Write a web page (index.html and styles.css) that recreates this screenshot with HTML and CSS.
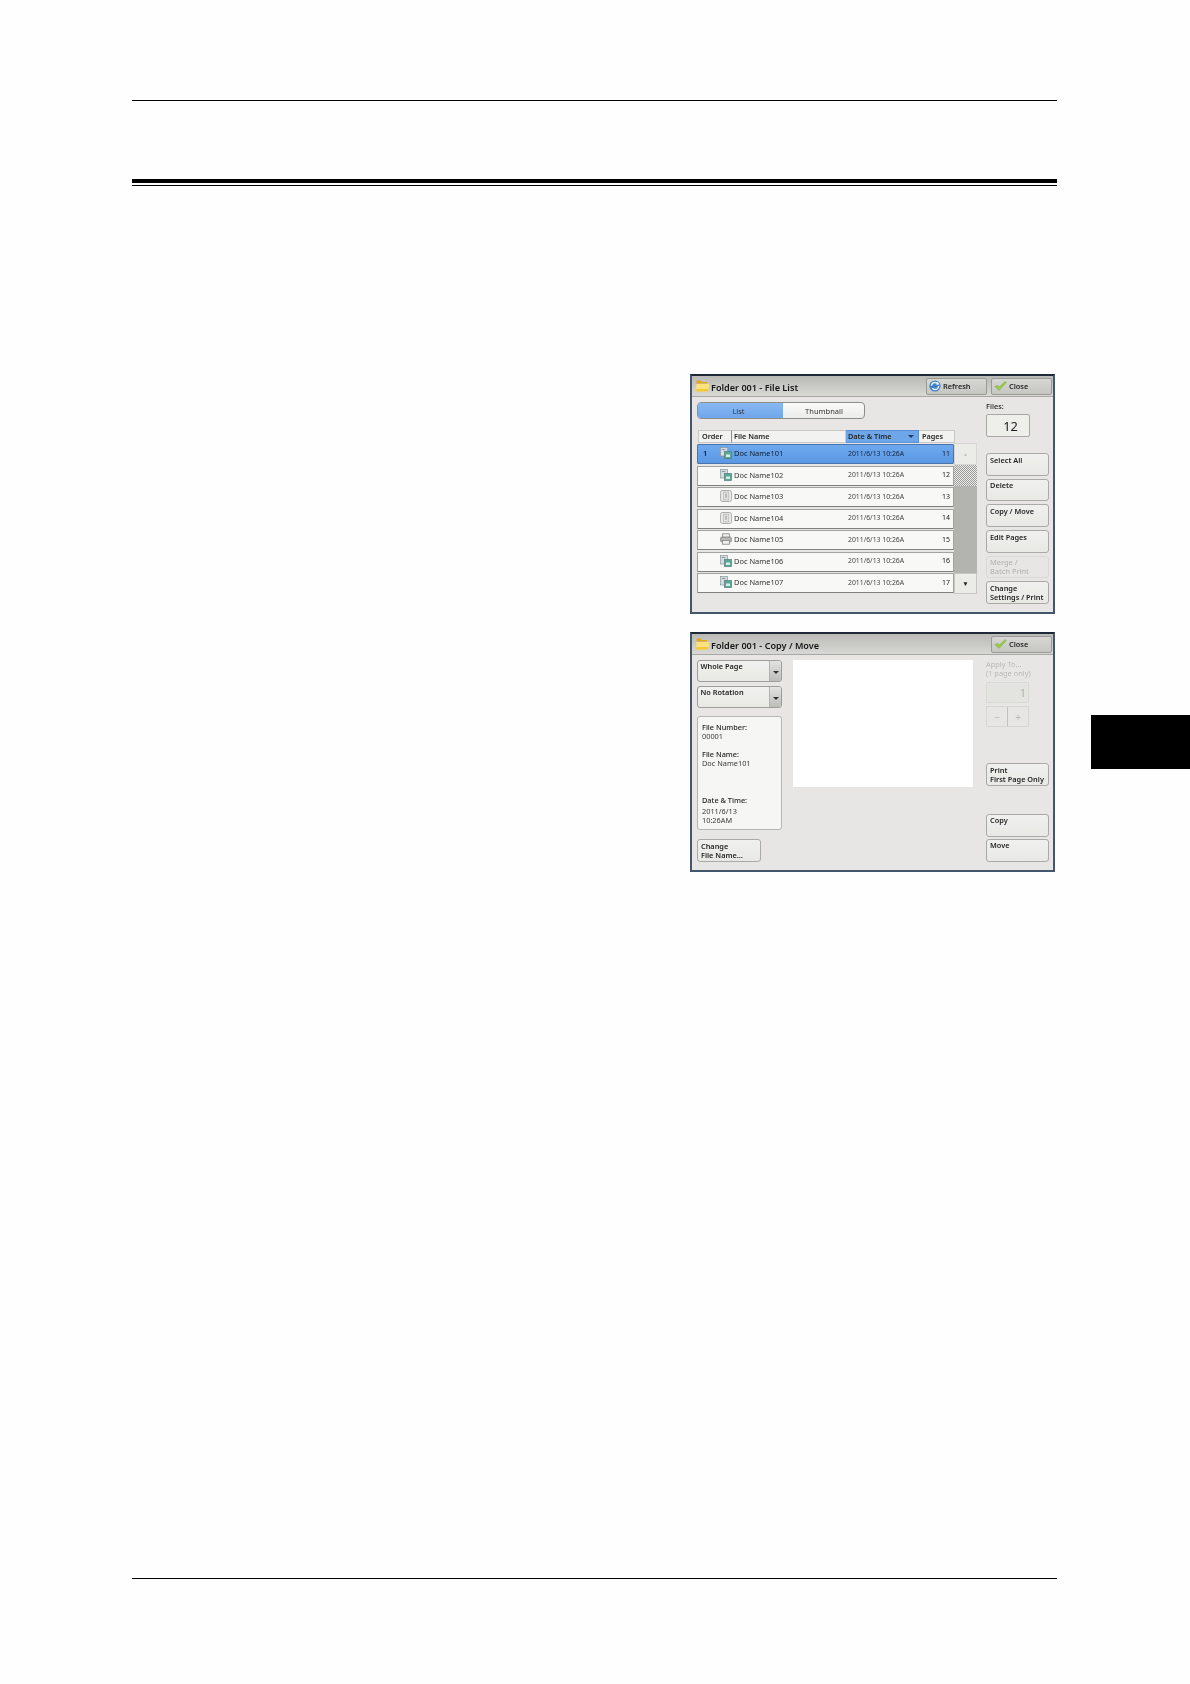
FILE: index.html
```html
<!DOCTYPE html>
<html lang="en">
<head>
<meta charset="utf-8">
<title>Folder 001</title>
<link rel="stylesheet" href="styles.css">
</head>
<body>
<svg class="defs" width="0" height="0" aria-hidden="true">
  <symbol id="i-folder" viewBox="0 0 14 12">
    <path d="M0.5 2.2 L0.5 1.2 Q0.5 0.5 1.2 0.5 L4.6 0.5 L5.8 2 L11 2 L11 3.6 L0.5 3.6 Z" fill="#e2a818"/>
    <path d="M0.3 4 L13.6 4 L12 11.5 L0.3 11.5 Z" fill="#fbe27c"/>
    <path d="M0.3 9 L12.5 9 L12 11.5 L0.3 11.5 Z" fill="#f4c83c"/>
  </symbol>
  <symbol id="i-file" viewBox="0 0 12 12">
    <rect x="0.5" y="0.5" width="7" height="8.5" fill="#d3dce1" stroke="#8b979e" stroke-width=".7"/>
    <rect x="1.8" y="2" width="3.5" height="1" fill="#8b979e"/>
    <rect x="4.5" y="4.5" width="7" height="7" fill="#5aa892" stroke="#567a82" stroke-width=".7"/>
    <rect x="6" y="7.5" width="4" height="2.5" fill="#d4efe6"/>
  </symbol>
  <symbol id="i-note" viewBox="0 0 12 12">
    <rect x="0.6" y="0.5" width="10.8" height="11" rx="1.8" fill="#f0f0ee" stroke="#9a9a98" stroke-width=".8"/>
    <rect x="3.2" y="2" width="5.6" height="8" fill="#e2e2e0" stroke="#a8a8a6" stroke-width=".6"/>
    <path d="M6 3.6 V7.8" stroke="#8a8a88" stroke-width=".9"/>
  </symbol>
  <symbol id="i-printer" viewBox="0 0 12 12">
    <rect x="2.5" y="0.8" width="7" height="3.4" fill="#f1f1ef" stroke="#858583" stroke-width=".8"/>
    <rect x="0.6" y="4.2" width="10.8" height="4.6" rx="1" fill="#b9b9b7" stroke="#7c7c7a" stroke-width=".8"/>
    <rect x="2.5" y="7.4" width="7" height="3.8" fill="#f1f1ef" stroke="#858583" stroke-width=".8"/>
  </symbol>
  <symbol id="i-refresh" viewBox="0 0 12 12">
    <circle cx="6" cy="6" r="5.6" fill="#3f82c8"/>
    <circle cx="6" cy="6" r="3.6" fill="none" stroke="#e8f2fb" stroke-width="1.5" stroke-dasharray="8.5 3"/>
    <path d="M8.4 1.6 L10.6 4.4 L7.2 4.8 Z" fill="#e8f2fb"/>
  </symbol>
  <symbol id="i-check" viewBox="0 0 13 10">
    <path d="M0.8 5.4 L4 4.4 L5.4 6 L11 0.6 L12.4 1.6 L5 9.4 Z" fill="#9ccb4a" stroke="#6da02c" stroke-width=".4"/>
  </symbol>
</svg>

<div class="page">
  <div class="rule-top"></div>
  <div class="rule-heavy"></div>
  <div class="rule-thin"></div>

  <div class="figures">
    <section class="dialog">
      <header class="titlebar">
        <svg class="ico-folder"><use href="#i-folder"/></svg>
        <h2 class="title">Folder 001 - File List</h2>
        <button class="bar-btn"><svg class="ico-refresh"><use href="#i-refresh"/></svg>Refresh</button>
        <button class="bar-btn"><svg class="ico-check"><use href="#i-check"/></svg>Close</button>
      </header>
      <div class="body">
        <div class="main">
          <div class="segments">
            <span class="seg seg-on">List</span>
            <span class="seg">Thumbnail</span>
          </div>
          <div class="thead">
            <span class="th th-order">Order</span>
            <span class="th th-name">File Name</span>
            <span class="th th-date">Date &amp; Time<i class="tri"></i></span>
            <span class="th th-pages">Pages</span>
          </div>
          <div class="listwrap">
            <div class="rows">
              <div class="row row-on"><span class="c-order">1</span><svg class="ico-row"><use href="#i-file"/></svg><span class="c-name">Doc Name101</span><span class="c-date">2011/6/13 10:26A</span><span class="c-pages">11</span></div>
              <div class="row"><span class="c-order"></span><svg class="ico-row"><use href="#i-file"/></svg><span class="c-name">Doc Name102</span><span class="c-date">2011/6/13 10:26A</span><span class="c-pages">12</span></div>
              <div class="row"><span class="c-order"></span><svg class="ico-row"><use href="#i-note"/></svg><span class="c-name">Doc Name103</span><span class="c-date">2011/6/13 10:26A</span><span class="c-pages">13</span></div>
              <div class="row"><span class="c-order"></span><svg class="ico-row"><use href="#i-note"/></svg><span class="c-name">Doc Name104</span><span class="c-date">2011/6/13 10:26A</span><span class="c-pages">14</span></div>
              <div class="row"><span class="c-order"></span><svg class="ico-row"><use href="#i-printer"/></svg><span class="c-name">Doc Name105</span><span class="c-date">2011/6/13 10:26A</span><span class="c-pages">15</span></div>
              <div class="row"><span class="c-order"></span><svg class="ico-row"><use href="#i-file"/></svg><span class="c-name">Doc Name106</span><span class="c-date">2011/6/13 10:26A</span><span class="c-pages">16</span></div>
              <div class="row"><span class="c-order"></span><svg class="ico-row"><use href="#i-file"/></svg><span class="c-name">Doc Name107</span><span class="c-date">2011/6/13 10:26A</span><span class="c-pages">17</span></div>
            </div>
            <div class="scroll">
              <span class="sc-btn sc-up">▲</span>
              <span class="sc-thumb"></span>
              <span class="sc-track"></span>
              <span class="sc-btn sc-down">▼</span>
            </div>
          </div>
        </div>
        <div class="side">
          <span class="files-label">Files:</span>
          <div class="files-box">12</div>
          <div class="stack">
            <button class="btn">Select All</button>
            <button class="btn">Delete</button>
            <button class="btn">Copy / Move</button>
            <button class="btn">Edit Pages</button>
            <button class="btn btn-off"><span>Merge /<br>Batch Print</span></button>
            <button class="btn"><span>Change<br>Settings / Print</span></button>
          </div>
        </div>
      </div>
    </section>

    <section class="dialog">
      <header class="titlebar">
        <svg class="ico-folder"><use href="#i-folder"/></svg>
        <h2 class="title">Folder 001 - Copy / Move</h2>
        <button class="bar-btn"><svg class="ico-check"><use href="#i-check"/></svg>Close</button>
      </header>
      <div class="body body-copy">
        <div class="left">
          <div class="drop"><span class="drop-text">Whole Page</span><span class="drop-arrow"><i class="tri tri-dark"></i></span></div>
          <div class="drop"><span class="drop-text">No Rotation</span><span class="drop-arrow"><i class="tri tri-dark"></i></span></div>
          <div class="info">
            <p class="info-k">File Number:</p>
            <p class="info-v">00001</p>
            <p class="info-k info-gap1">File Name:</p>
            <p class="info-v">Doc Name101</p>
            <p class="info-k info-gap2">Date &amp; Time:</p>
            <p class="info-v info-date">2011/6/13<br>10:26AM</p>
          </div>
          <button class="btn btn-rename"><span>Change<br>File Name...</span></button>
        </div>
        <div class="preview"></div>
        <div class="side side-copy">
          <p class="apply">Apply To...<br>(1 page only)</p>
          <div class="num">1</div>
          <div class="stepper"><span>−</span><span>+</span></div>
          <button class="btn btn-print"><span>Print<br>First Page Only</span></button>
          <button class="btn btn-copy">Copy</button>
          <button class="btn btn-move">Move</button>
        </div>
      </div>
    </section>
  </div>

  <div class="rule-bottom"></div>
  <div class="chapter-tab"></div>
</div>
</body>
</html>
```

FILE: styles.css
```css
* { box-sizing: border-box; }
html, body { margin: 0; padding: 0; background: #fefefe; }
body { font-family: "Noto Sans", "Liberation Sans", sans-serif; color: #222; }
.defs { position: absolute; }
.page { position: relative; width: 1190px; height: 1684px; padding: 100px 133px 0 132px; overflow: hidden; }
.rule-top { height: 1px; background: #000; }
.rule-heavy { height: 4px; margin-top: 78px; background: #000; }
.rule-thin { height: 1px; margin-top: 2px; background: #000; }
.figures { display: flex; flex-direction: column; align-items: flex-end; gap: 18px; margin-top: 188px; padding-right: 2px; }
.rule-bottom { height: 1px; margin-top: 706px; background: #000; }
.chapter-tab { position: absolute; left: 1091px; top: 715px; width: 99px; height: 54px; background: #000; }

.dialog { width: 365px; height: 240px; display: flex; flex-direction: column; background: #e7e6e4; border: 2px solid #44566c; border-top-color: #1d2937; filter: blur(.4px); }
.titlebar { height: 21px; flex: none; display: flex; align-items: center; gap: 1px; padding: 0 1px 0 4px; background: linear-gradient(#b9b9b5, #d8d8d4); border-bottom: 1px solid #a7a7a3; }
.ico-folder { width: 14px; height: 12px; flex: none; }
.title { margin: 2px auto 0 0; font-size: 9.1px; font-weight: 600; color: #161616; white-space: nowrap; }
.bar-btn { width: 61px; height: 17px; display: flex; align-items: center; gap: 2px; padding: 0 0 0 2px; font: 600 7.4px "Noto Sans", sans-serif; color: #262626; background: linear-gradient(#d6d6d2, #c6c6c2); border: 1px solid #9a9a96; border-radius: 2px; }
.bar-btn + .bar-btn { margin-left: 3px; }
.ico-refresh { width: 12px; height: 12px; flex: none; }
.ico-check { width: 13px; height: 10px; flex: none; }

.body { flex: 1; display: flex; gap: 9px; padding: 5px 4px 0 5px; }
.main { width: 280px; }
.segments { width: 168px; height: 17px; display: flex; border: 1px solid #8d8d8a; border-radius: 4px; overflow: hidden; background: linear-gradient(#fbfbfa, #ebebe8); }
.seg { flex: 1; display: flex; align-items: center; justify-content: center; padding-left: 1px; font-size: 7.5px; color: #333; }
.seg-on { background: linear-gradient(#87b8f2, #6fa6ea); flex: none; width: 85px; padding: 0 4px 0 0; }

.thead { width: 257px; height: 13px; margin: 11px 0 1px 1px; display: flex; font-size: 7.3px; font-weight: 600; background: #f2f2f0; }
.th { display: flex; align-items: center; padding: 0 0 1px 2px; border: 1px solid #c8c8c5; border-left: 0; color: #262626; }
.th-order { width: 34px; border-left: 1px solid #c8c8c5; padding-left: 3px; border-right-color: #8d8d8a; }
.th-name { width: 114px; }
.th-date { width: 73px; justify-content: space-between; padding-right: 4px; background: #6ea6ea; border-color: #5a8fd2; }
.th-pages { width: 36px; padding-left: 3px; }
.tri { display: block; width: 0; height: 0; border: 3px solid transparent; border-top: 3.5px solid #1d3a66; border-bottom: 0; }
.tri-dark { border-top-color: #333; }

.listwrap { display: flex; align-items: flex-start; }
.rows { width: 257px; display: flex; flex-direction: column; gap: 1.5px; }
.row { height: 20px; display: grid; grid-template-columns: 17px 14px 114px 1fr auto; align-items: center; padding: 0 3px 1.5px 5px; font-size: 7.45px; background: #f8f8f6; border: 1px solid #a2a2a0; border-bottom: 1.5px solid #7f7f7d; border-radius: 1px; }
.row-on { background: linear-gradient(#6ea9ee, #5b98e4); border-color: #4675b0; color: #0d1a2c; }
.ico-row { width: 12px; height: 12px; }
.c-order { font-weight: 600; }
.c-name { color: #333; white-space: nowrap; }
.row-on .c-name { color: #0e1d30; }
.c-date { font-size: 6.85px; color: #444; white-space: nowrap; overflow: hidden; }
.row-on .c-date { color: #12243c; }
.c-pages { font-size: 7px; text-align: right; }

.scroll { width: 23px; height: 151px; margin-top: -1px; display: flex; flex-direction: column; }
.sc-btn { height: 22px; flex: none; display: flex; align-items: center; justify-content: center; font-size: 6.5px; background: #ebebe8; border: 1px solid #d6d6d3; }
.sc-up { color: #c4c4c1; font-size: 5px; }
.sc-down { height: 21px; color: #222; border-color: #c6c6c3; }
.sc-thumb { height: 21px; flex: none; background: repeating-conic-gradient(#9a9a98 0 25%, #ecece9 0 50%) 0 0 / 2px 2px; }
.sc-track { flex: 1; background: #b3b3b0; }

.side { width: 63px; flex: none; display: flex; flex-direction: column; }
.files-label { font-size: 7.4px; font-weight: 500; line-height: 9px; }
.files-box { width: 44px; height: 23px; margin-top: 3px; padding-left: 5px; display: flex; align-items: center; justify-content: center; font-size: 12.8px; background: #eeeeeb; border: 1px solid #a7a7a4; border-radius: 2px; }
.stack { display: flex; flex-direction: column; gap: 3px; margin-top: 16px; }
.btn { width: 63px; height: 22.7px; display: flex; align-items: flex-start; padding: 1.5px 2px 0 3px; font: 600 7.35px/9.2px "Noto Sans", sans-serif; color: #262626; text-align: left; white-space: nowrap; background: linear-gradient(#f0f0ee, #e8e8e5); border: 1px solid #a9a9a6; border-radius: 3px; }
.btn-off { color: #b5b5b2; border-color: #d9d9d6; background: #e7e6e4; font-weight: 500; }

.body-copy { gap: 0; }
.left { width: 85px; flex: none; display: flex; flex-direction: column; }
.drop { height: 22px; display: flex; margin-bottom: 4px; background: linear-gradient(#f1f1ef, #e8e8e5); border: 1px solid #9d9d9a; border-radius: 3px; overflow: hidden; }
.drop-text { flex: 1; padding: 1px 0 0 2.5px; font-size: 7.35px; font-weight: 600; line-height: 9px; }
.drop-arrow { width: 12px; display: flex; align-items: center; justify-content: center; padding-top: 3px; background: linear-gradient(#e3e3e0, #bdbdb9); border-left: 1px solid #b2b2af; }
.info { height: 114px; margin-top: 4px; padding: 6px 4px 0 4px; background: #f6f6f4; border: 1px solid #b4b4b1; border-radius: 3px; font-size: 7.35px; line-height: 9px; }
.info p { margin: 0; }
.info-k { font-weight: 500; }
.info-v { color: #3a3a3a; }
.info-gap1 { margin-top: 9px !important; }
.info-gap2 { margin-top: 28px !important; }
.info-date { margin-top: 2px !important; }
.btn-rename { width: 64px; margin-top: 9px; }
.preview { width: 180px; height: 127px; flex: none; margin: 0 13px 0 11px; background: #fff; }
.apply { margin: 0; font-size: 7.4px; line-height: 9px; color: #b9b9b6; white-space: nowrap; }
.num { width: 43px; height: 21px; margin-top: 4px; padding-right: 2px; display: flex; align-items: center; justify-content: flex-end; font-size: 11px; color: #b0b0ad; background: #e3e3e0; border: 1px solid #d9d9d6; }
.stepper { width: 43px; height: 21px; margin-top: 3px; display: flex; border: 1px solid #d6d6d3; color: #b9b9b6; font-size: 10px; }
.stepper span { flex: 1; display: flex; align-items: center; justify-content: center; }
.stepper span + span { border-left: 1px solid #c0c0bd; }
.btn-print { margin-top: 36px; }
.btn-copy { margin-top: 28.3px; }
.btn-move { margin-top: 2.3px; }
```
